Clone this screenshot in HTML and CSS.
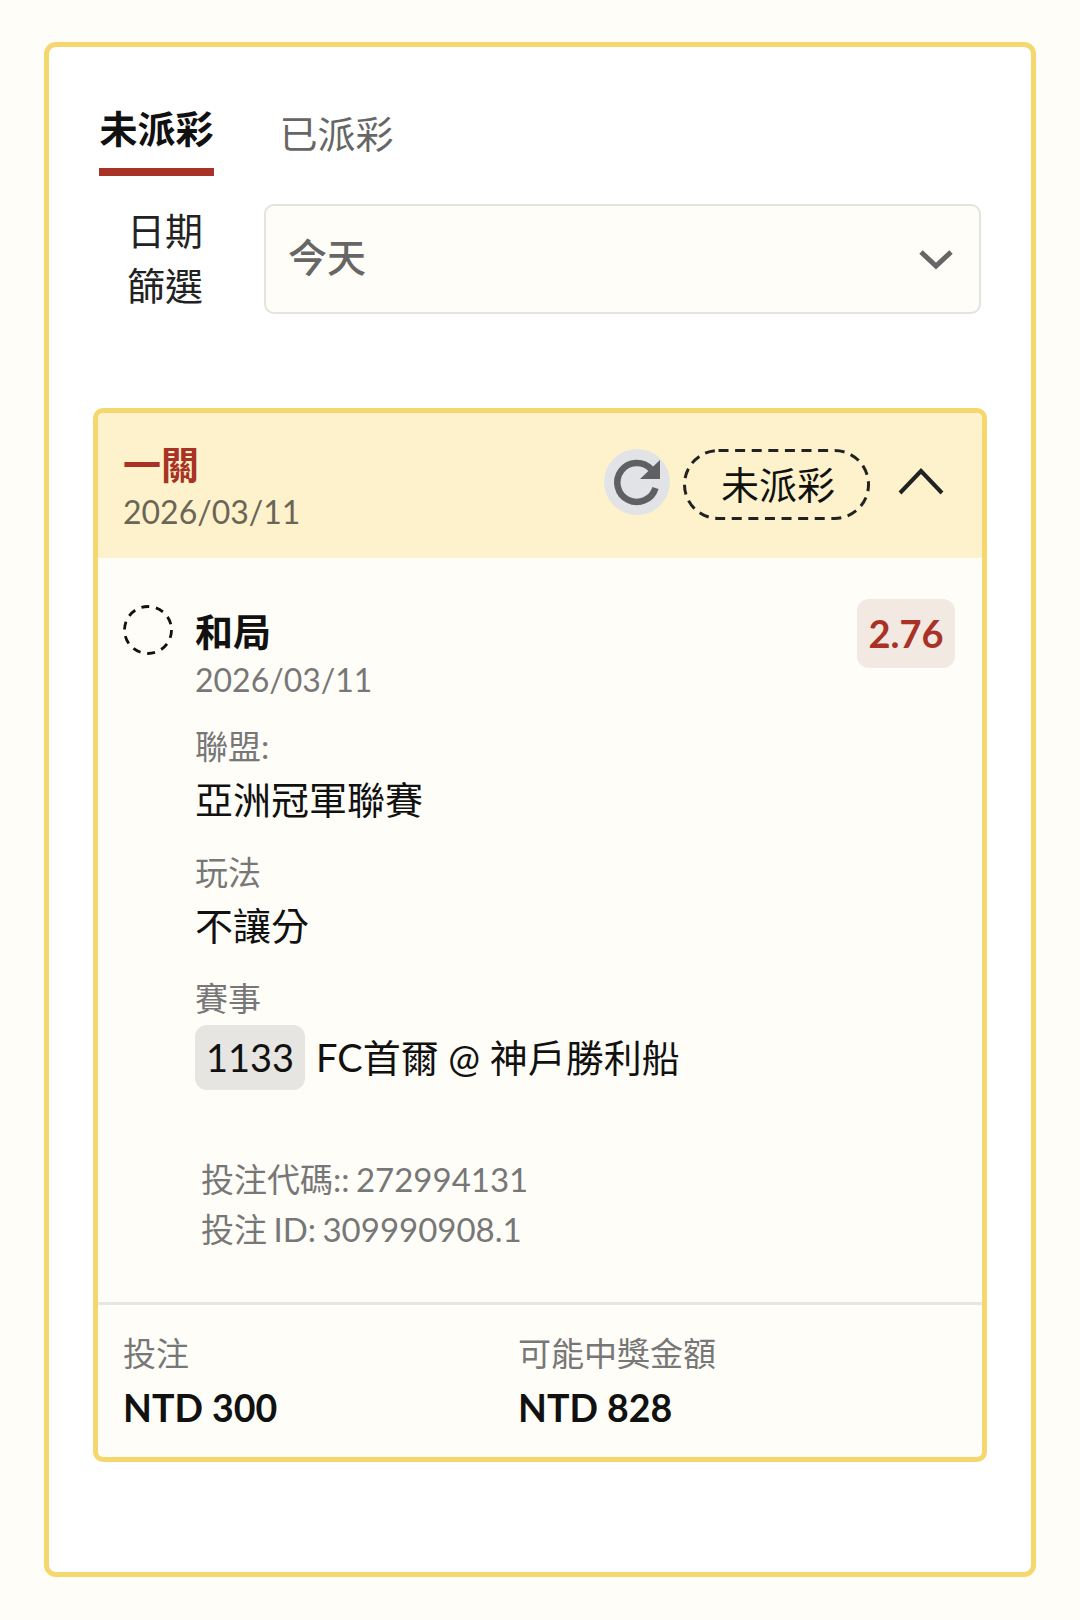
FILE: index.html
```html
<!DOCTYPE html>
<html>
	<head>
		<meta charset="UTF-8">
		<title>投注記錄</title>
		<link rel="stylesheet" href="styles.css">
	</head>
	<body>
		<div class="panel">
			<div class="tabs">
				<div class="tab active">未派彩</div>
				<div class="tab">已派彩</div>
			</div>
			<div class="filter">
				<div class="filterLabel">日期<br>篩選</div>
				<div class="select">
					<span class="selectText">今天</span>
					<svg class="selectArrow" width="34" height="21" viewBox="0 0 34 21"><path d="M2 3L17 17L32 3" fill="none" stroke="#666" stroke-width="5"/></svg>
				</div>
			</div>
			<div class="bet">
				<div class="betHead">
					<div class="betTitle">
						<p class="betType">一關</p>
						<p class="betDate">2026/03/11</p>
					</div>
					<div class="refresh">
						<svg width="66" height="66" viewBox="0 0 66 66">
							<path d="M47 20A19.5 19.5 0 1 0 51.5 39" fill="none" stroke="#5f6062" stroke-width="6.5"/>
							<path d="M56 11V30H36Z" fill="#5f6062"/>
						</svg>
					</div>
					<div class="pill">
						<svg class="pillLine" width="187" height="71" viewBox="0 0 187 71"><rect x="1.5" y="1.5" width="184" height="68" rx="34" fill="none" stroke="#222" stroke-width="3" stroke-dasharray="10 6.6"/></svg>
						未派彩
					</div>
					<svg class="headArrow" width="46" height="28" viewBox="0 0 46 28"><path d="M2 26L23 4L44 26" fill="none" stroke="#222" stroke-width="4"/></svg>
				</div>
				<div class="betBody">
					<div class="pick">
						<svg class="pickIcon" width="50" height="50" viewBox="0 0 50 50"><circle cx="25" cy="25" r="23.5" fill="none" stroke="#111" stroke-width="2.8" stroke-dasharray="8 6.76"/></svg>
						<div class="pickText">
							<p class="pickName">和局</p>
							<p class="pickDate">2026/03/11</p>
						</div>
						<div class="odds">2.76</div>
					</div>
					<div class="field">
						<p class="fieldLabel">聯盟:</p>
						<p class="fieldValue">亞洲冠軍聯賽</p>
					</div>
					<div class="field">
						<p class="fieldLabel">玩法</p>
						<p class="fieldValue">不讓分</p>
					</div>
					<div class="field">
						<p class="fieldLabel">賽事</p>
						<div class="match">
							<span class="matchNo">1133</span>
							<span class="matchName">FC首爾 @ 神戶勝利船</span>
						</div>
					</div>
					<div class="codes">
						<p>投注代碼:: 272994131</p>
						<p>投注 ID: 309990908.1</p>
					</div>
				</div>
				<div class="betFoot">
					<div class="footCol">
						<p class="footLabel">投注</p>
						<p class="footValue">NTD 300</p>
					</div>
					<div class="footCol">
						<p class="footLabel">可能中獎金額</p>
						<p class="footValue">NTD 828</p>
					</div>
				</div>
			</div>
		</div>
	</body>
</html>
```

FILE: styles.css
```css
*{
	margin: 0;
	padding: 0;
	box-sizing: border-box;
}
body{
	background-color: #FFFDF7;
	padding: 42px 44px 0 44px;
	font-family: "Lato", "Noto Sans CJK TC", sans-serif;
	color: #111;
}
.panel{
	width: 992px;
	height: 1535px;
	padding: 0 44px;
	background-color: #fff;
	border: 5px solid #F5D76E;
	border-radius: 12px;
}
.tabs{
	display: flex;
	gap: 65px;
	padding: 51px 0 0 6px;
}
.tab{
	width: 115px;
	height: 78px;
	font-size: 38px;
	line-height: 60px;
	text-align: center;
	color: #666;
	padding-top: 5px;
}
.tab.active{
	font-weight: 700;
	color: #111;
	padding-top: 0;
	border-bottom: 8px solid #A93226;
}
.filter{
	display: flex;
	align-items: center;
	margin-top: 28px;
}
.filterLabel{
	width: 171px;
	padding-right: 27px;
	margin-top: -3px;
	font-size: 38px;
	line-height: 55px;
	text-align: center;
	color: #222;
}
.select{
	flex: 1;
	height: 110px;
	margin-right: 6px;
	padding: 0 26px 0 22px;
	display: flex;
	align-items: center;
	justify-content: space-between;
	background-color: #FFFDF7;
	border: 2px solid #E5E3DD;
	border-radius: 10px;
}
.selectText{
	margin-bottom: 8px;
	font-size: 39px;
	font-weight: 500;
	color: #666;
}
.bet{
	margin-top: 94px;
	height: 1054px;
	display: flex;
	flex-direction: column;
	background-color: #FFFDF7;
	border: 5px solid #F5D76E;
	border-radius: 10px;
	overflow: hidden;
}
.betHead{
	height: 145px;
	display: flex;
	align-items: center;
	padding: 0 38px 7px 25px;
	background-color: #FDF2CB;
}
.betTitle{
	flex: 1;
	padding-top: 10px;
}
.betType{
	font-size: 38px;
	line-height: 50px;
	font-weight: 700;
	color: #A93226;
}
.betDate{
	font-size: 32px;
	line-height: 46px;
	color: #6B6557;
}
.refresh{
	width: 66px;
	height: 66px;
	border-radius: 50%;
	background-color: #E1E3E6;
}
.refresh svg{
	display: block;
}
.pill{
	position: relative;
	width: 187px;
	height: 71px;
	margin: 4px 28px 0 13px;
	padding-left: 3px;
	font-size: 38px;
	line-height: 71px;
	text-align: center;
}
.pillLine{
	position: absolute;
	left: 0;
	top: 0;
}
.headArrow{
	margin-bottom: 2px;
}
.betBody{
	flex: 1;
	padding: 41px 27px 0 25px;
}
.pick{
	display: flex;
	align-items: flex-start;
}
.pickIcon{
	margin-top: 6px;
}
.pickText{
	flex: 1;
	margin-left: 22px;
}
.pickName{
	font-size: 38px;
	line-height: 51px;
	font-weight: 700;
	padding-top: 7px;
}
.pickDate{
	font-size: 32px;
	line-height: 46px;
	color: #777;
}
.odds{
	width: 98px;
	height: 69px;
	background-color: #F3E9E3;
	border-radius: 12px;
	font-size: 38px;
	font-weight: 700;
	line-height: 69px;
	text-align: center;
	color: #A93226;
}
.field{
	margin: 21px 0 0 72px;
}
.fieldLabel{
	font-size: 33px;
	line-height: 44px;
	color: #777;
}
.fieldValue{
	margin-top: 1px;
	font-size: 38px;
	line-height: 60px;
	color: #111;
}
.match{
	display: flex;
	align-items: center;
	gap: 11px;
	margin-top: 5px;
}
.matchNo{
	width: 110px;
	height: 65px;
	background-color: #E6E5E1;
	border-radius: 12px;
	font-size: 38px;
	line-height: 65px;
	text-align: center;
}
.matchName{
	margin-bottom: 4px;
	font-size: 38px;
	color: #111;
}
.codes{
	margin: 64px 0 0 78px;
	font-size: 33px;
	line-height: 50px;
	word-spacing: -2px;
	color: #777;
}
.betFoot{
	height: 155px;
	display: flex;
	padding: 25px 25px 0 25px;
	border-top: 3px solid #E8E6E0;
}
.footCol{
	width: 395px;
}
.footLabel{
	font-size: 33px;
	line-height: 46px;
	color: #777;
}
.footValue{
	font-size: 37.5px;
	font-weight: 700;
	line-height: 64px;
	color: #111;
}
```
